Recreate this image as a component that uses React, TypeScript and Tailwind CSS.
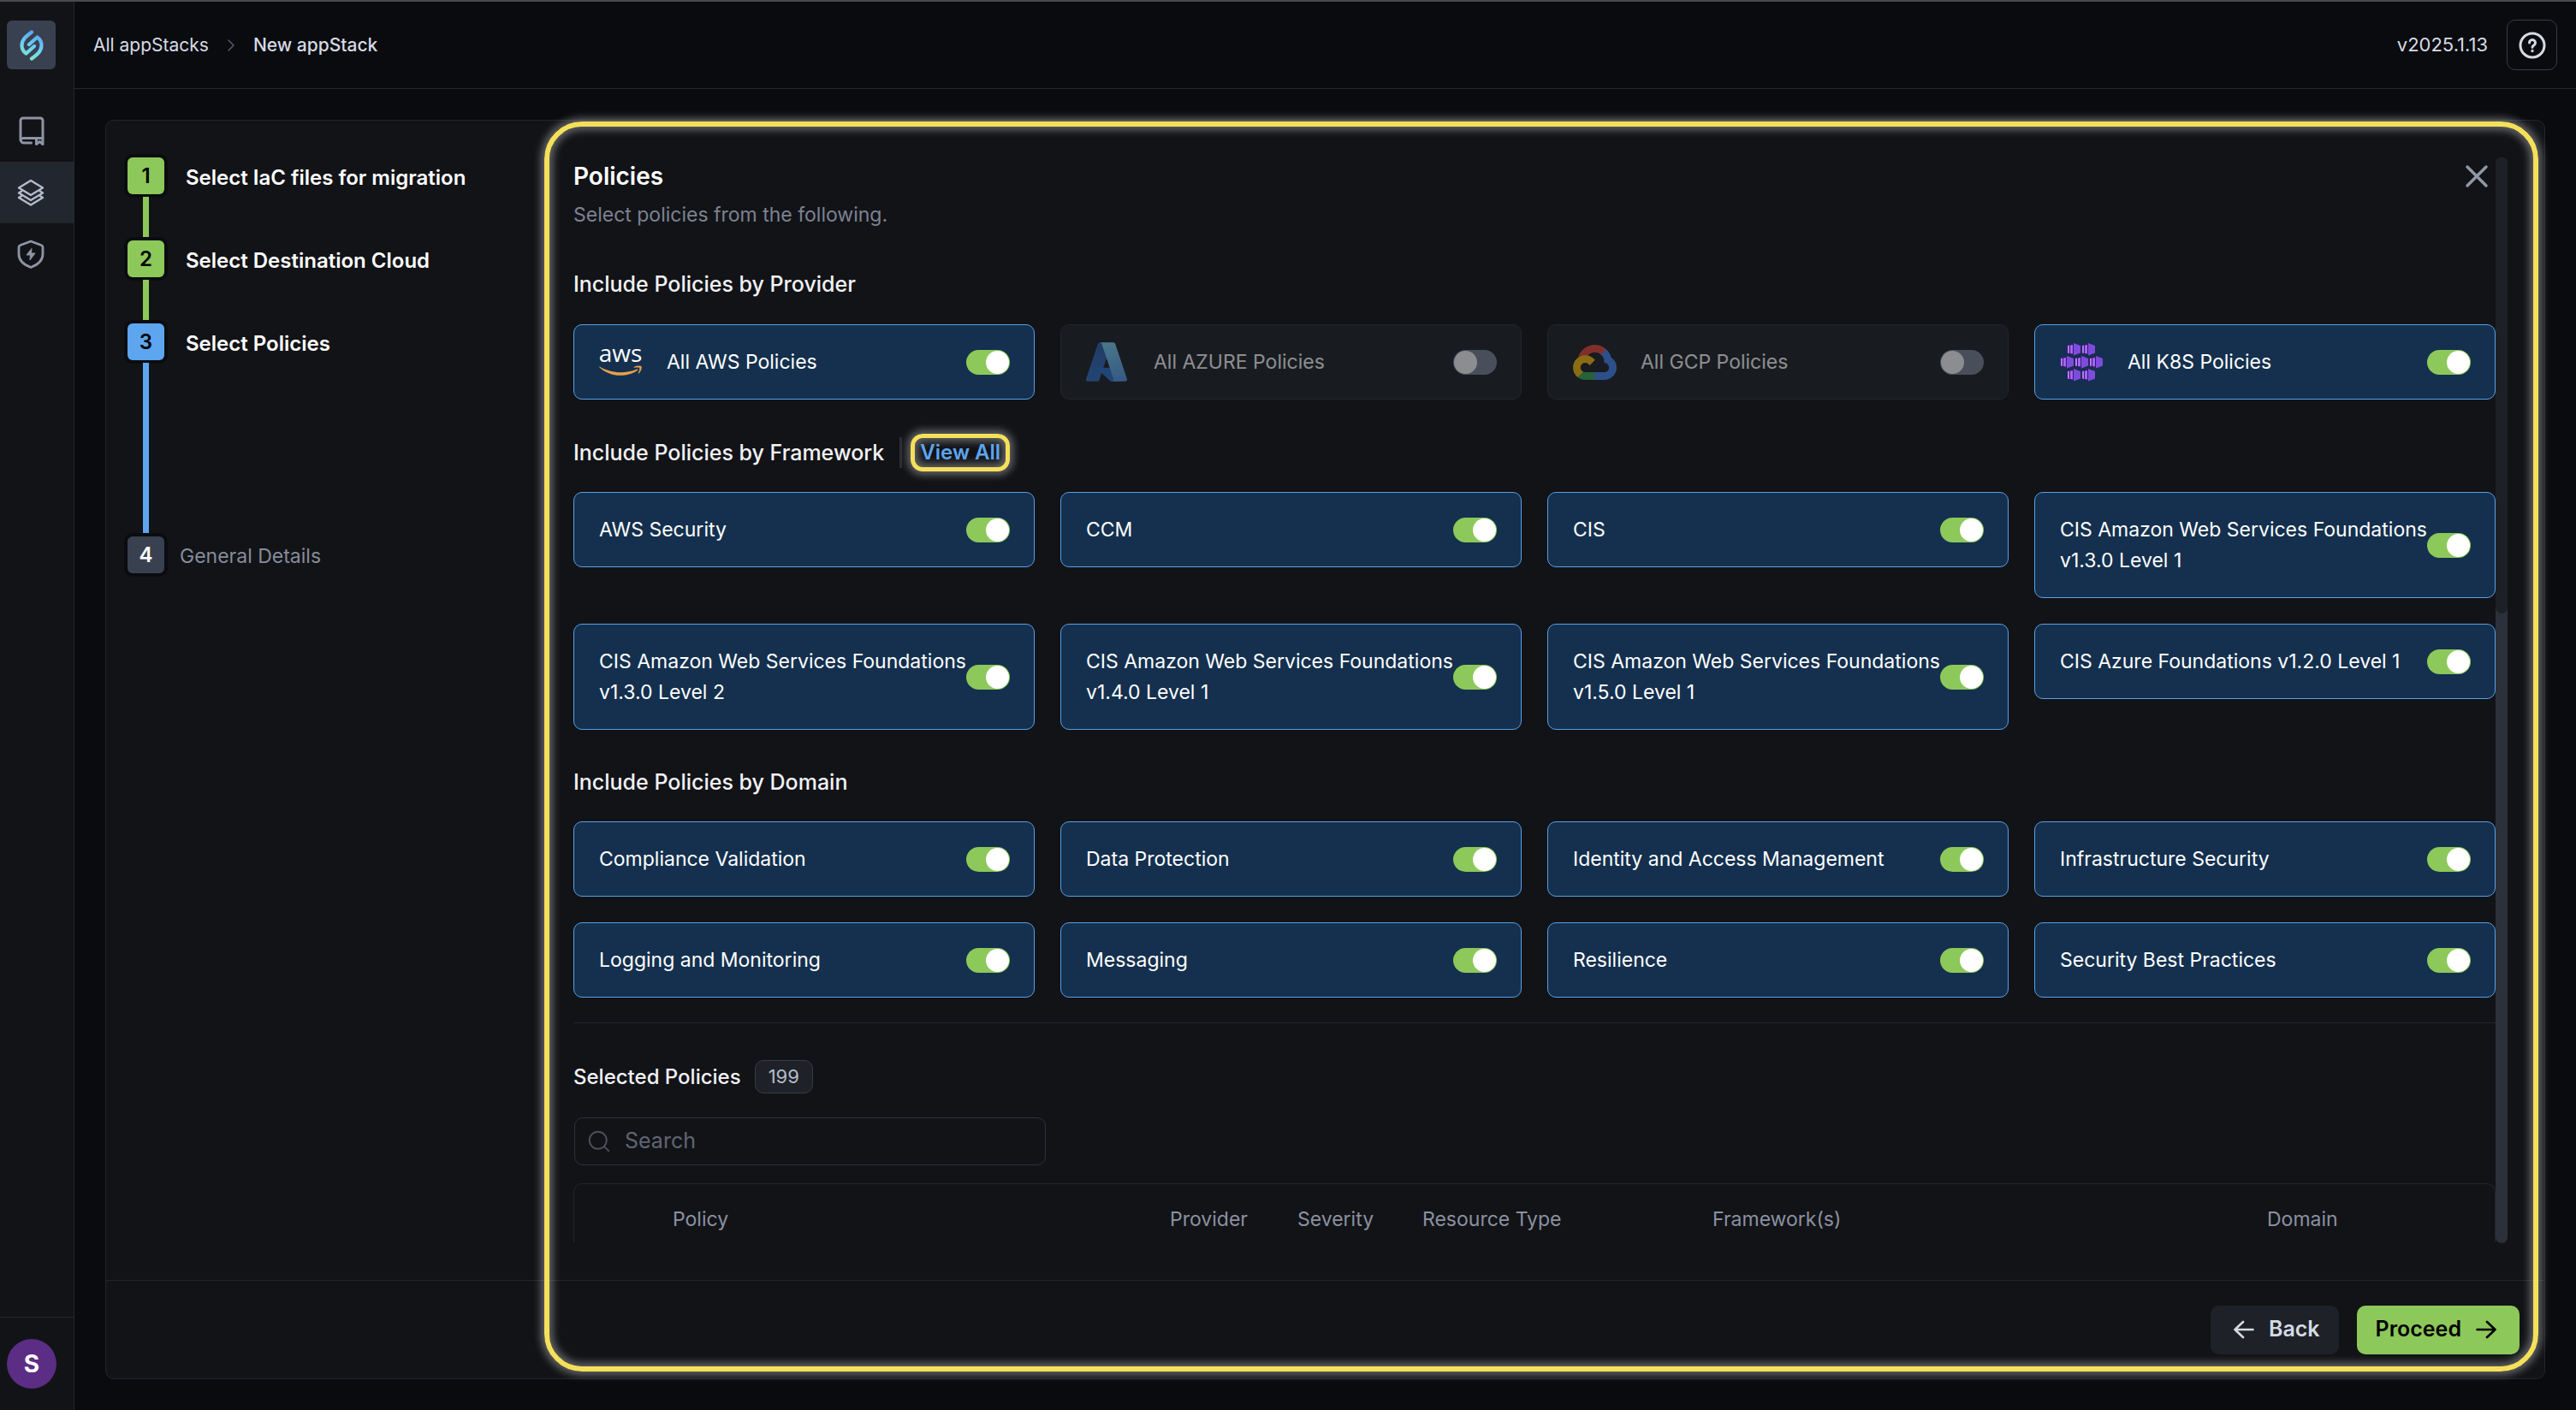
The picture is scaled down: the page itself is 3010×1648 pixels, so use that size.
import React, { useState } from 'react';
import { ChevronRight, Search } from 'lucide-react';

type Provider = 'aws' | 'azure' | 'gcp' | 'k8s';

interface Policy {
  name: string;
  provider?: Provider;
  disabled?: boolean;
}

const PROVIDERS: Policy[] = [
  { name: 'All AWS Policies', provider: 'aws' },
  { name: 'All AZURE Policies', provider: 'azure', disabled: true },
  { name: 'All GCP Policies', provider: 'gcp', disabled: true },
  { name: 'All K8S Policies', provider: 'k8s' }
];

const FRAMEWORKS: Policy[] = [
  { name: 'AWS Security' },
  { name: 'CCM' },
  { name: 'CIS' },
  { name: 'CIS Amazon Web Services Foundations v1.3.0 Level 1' },
  { name: 'CIS Amazon Web Services Foundations v1.3.0 Level 2' },
  { name: 'CIS Amazon Web Services Foundations v1.4.0 Level 1' },
  { name: 'CIS Amazon Web Services Foundations v1.5.0 Level 1' },
  { name: 'CIS Azure Foundations v1.2.0 Level 1' }
];

const DOMAINS: Policy[] = [
  { name: 'Compliance Validation' },
  { name: 'Data Protection' },
  { name: 'Identity and Access Management' },
  { name: 'Infrastructure Security' },
  { name: 'Logging and Monitoring' },
  { name: 'Messaging' },
  { name: 'Resilience' },
  { name: 'Security Best Practices' }
];

function BrandLogo() {
  return (
    <svg viewBox="0 0 28 36" className="h-9 w-7" fill="none" aria-hidden="true">
      <defs>
        <linearGradient id="brand" x1="20" y1="2" x2="8" y2="34" gradientUnits="userSpaceOnUse">
          <stop stopColor="#5aa2f0" />
          <stop offset="0.6" stopColor="#6fd3f5" />
          <stop offset="1" stopColor="#7ee6c8" />
        </linearGradient>
      </defs>
      <g stroke="url(#brand)" strokeWidth="4.2" strokeLinecap="round" strokeLinejoin="round">
        <path d="M14 2.500 C8 7 2.500 11 2.500 18 C2.500 22 4.500 25.500 7.500 27.500 L17 19" />
        <path d="M14 33.500 C20 29 25.500 25 25.500 18 C25.500 14 23.500 10.500 20.500 8.500 L11 17" />
      </g>
    </svg>);

}

function BookIcon() {
  return (
    <svg viewBox="0 0 30 34" className="h-[34px] w-[30px]" fill="none" stroke="currentColor" strokeWidth="3" strokeLinecap="round" strokeLinejoin="round" aria-hidden="true">
      <path d="M14.500 31 H6 a4 4 0 0 1 -4 -4 V5 a3 3 0 0 1 3 -3 H25 a3 3 0 0 1 3 3 V25.500 H6 a4 4 0 0 0 -4 2" />
      <path d="M20.500 26 V32.500 L24.300 29.500 L28 32.500 V25.500" />
    </svg>);

}

function LayersIcon() {
  return (
    <svg viewBox="0 0 32 32" className="size-8" fill="none" stroke="currentColor" strokeWidth="2.400" strokeLinejoin="round" aria-hidden="true">
      <path d="M16 2 L30 10.500 L16 19 L2 10.500 Z" />
      <path d="M6 14 L2 16.500 L16 25 L30 16.500 L26 14" />
      <path d="M6 19.500 L2 22 L16 30.500 L30 22 L26 19.500" />
    </svg>);

}

function ShieldIcon() {
  return (
    <svg viewBox="0 0 32 34" className="h-[34px] w-8" fill="none" stroke="currentColor" strokeWidth="2.8" strokeLinejoin="round" aria-hidden="true">
      <path d="M16 2 L28 6.500 C29.500 7 30 8 30 9.500 V17 C30 24.500 24 29.500 16 32.500 C8 29.500 2 24.500 2 17 V9.500 C2 8 2.500 7 4 6.500 Z" />
      <path d="M17 10.500 L11 18 H15.500 L15 24 L21 16 H16.500 Z" fill="currentColor" strokeWidth="1" />
    </svg>);

}

function HelpIcon() {
  return (
    <svg viewBox="0 0 32 32" className="size-8" fill="none" stroke="currentColor" strokeWidth="3" strokeLinecap="round" aria-hidden="true">
      <circle cx="16" cy="16" r="14" />
      <path d="M12.500 13 a3.500 3.500 0 1 1 5.500 2.800 c-1.400 0.900 -2 1.400 -2 2.500" />
      <circle cx="16" cy="22.500" r="0.700" strokeWidth="2" />
    </svg>);

}

function CloseIcon() {
  return (
    <svg viewBox="0 0 28 28" className="size-7" fill="none" stroke="currentColor" strokeWidth="3.5" strokeLinecap="round" aria-hidden="true">
      <path d="M3 3 L25 25 M25 3 L3 25" />
    </svg>);

}

function BackArrow() {
  return (
    <svg viewBox="0 0 24 22" className="h-[22px] w-6" fill="none" stroke="currentColor" strokeWidth="2.600" strokeLinecap="round" strokeLinejoin="round" aria-hidden="true">
      <path d="M22.500 11 H1.500 M11 2 L1.500 11 L11 20" />
    </svg>);

}

function ForwardArrow() {
  return (
    <svg viewBox="0 0 24 22" className="h-[22px] w-6" fill="none" stroke="currentColor" strokeWidth="2.600" strokeLinecap="round" strokeLinejoin="round" aria-hidden="true">
      <path d="M1.500 11 H22.500 M13 2 L22.500 11 L13 20" />
    </svg>);

}

function AwsLogo() {
  return (
    <svg viewBox="0 0 50 52" className="h-[52px] w-[50px] overflow-visible" aria-hidden="true">
      <text x="25" y="26" textAnchor="middle" fontSize="28" fontWeight="500" fill="#ffffff" className="font-['Open_Sans',sans-serif]">aws</text>
      <g fill="#e8a04a" transform="translate(0 12) scale(0.1645)">
        <path d="M273.500 143.700c-32.900 24.300-80.700 37.200-121.800 37.200c-57.600 0-109.500-21.300-148.700-56.700c-3.100-2.800-0.300-6.600 3.400-4.400c42.400 24.600 94.700 39.500 148.800 39.500c36.500 0 76.600-7.600 113.500-23.200C274.200 133.600 278.900 139.700 273.500 143.700z" />
        <path d="M287.200 128.100c-4.200-5.400-27.800-2.600-38.500-1.300c-3.200 0.400-3.700-2.400-0.800-4.500c18.800-13.200 49.700-9.400 53.300-5c3.600 4.500-1 35.400-18.600 50.200c-2.700 2.300-5.300 1.100-4.100-1.900C282.500 155.700 291.400 133.400 287.200 128.100z" />
      </g>
    </svg>);

}

function AzureLogo() {
  return (
    <svg viewBox="4 6 88 84" preserveAspectRatio="none" className="h-[46px] w-12" aria-hidden="true">
      <defs>
        <linearGradient id="azure-left" x1="42" y1="12" x2="16" y2="92" gradientUnits="userSpaceOnUse">
          <stop stopColor="#2b5da6" />
          <stop offset="1" stopColor="#2c70c8" />
        </linearGradient>
        <linearGradient id="azure-right" x1="46" y1="10" x2="75" y2="89" gradientUnits="userSpaceOnUse">
          <stop stopColor="#7ad2f4" />
          <stop offset="1" stopColor="#5598e6" />
        </linearGradient>
      </defs>
      <path fill="url(#azure-left)" d="M33.338 6.544h26.038l-27.030 80.087a4.152 4.152 0 0 1-3.933 2.824H8.149a4.145 4.145 0 0 1-3.928-5.470L29.404 9.368a4.152 4.152 0 0 1 3.934-2.825z" />
      <path fill="#2c6fce" d="M71.175 60.261h-41.290a1.911 1.911 0 0 0-1.305 3.309l26.532 24.764a4.171 4.171 0 0 0 2.846 1.121h23.380z" />
      <path fill="url(#azure-right)" d="M66.595 9.364a4.145 4.145 0 0 0-3.928-2.820H33.648a4.146 4.146 0 0 1 3.928 2.820l25.184 74.620a4.146 4.146 0 0 1-3.928 5.472h29.020a4.146 4.146 0 0 0 3.927-5.472z" />
    </svg>);

}

function GcpLogo() {
  return (
    <svg viewBox="0 0 256 206" className="h-[41px] w-[51px]" aria-hidden="true">
      <path fill="#ea4335" d="M170.252 56.819l22.253-22.253 1.483-9.370C153.437-11.677 88.976-7.496 52.420 33.920 42.267 45.423 34.734 59.764 30.717 74.573l7.970-1.123 44.505-7.340 3.436-3.513c19.797-21.742 53.270-24.667 76.128-6.168l7.496.390z" />
      <path fill="#4285f4" d="M224.205 73.918a100.249 100.249 0 0 0-30.217-48.722l-31.232 31.232a55.515 55.515 0 0 1 20.379 44.037v5.544c15.350 0 27.797 12.445 27.797 27.796 0 15.352-12.446 27.573-27.797 27.573h-55.671l-5.466 5.934v33.340l5.466 5.231h55.670c39.930.311 72.553-31.494 72.864-71.424a72.303 72.303 0 0 0-31.793-60.541" />
      <path fill="#34a853" d="M71.870 205.796h55.593V161.290H71.870a27.275 27.275 0 0 1-11.400-2.498l-7.887 2.420-22.409 22.253-1.952 7.574c12.567 9.489 27.900 14.825 43.647 14.757" />
      <path fill="#fbbc05" d="M71.870 61.425C31.940 61.664-.237 94.228.001 134.158a72.301 72.301 0 0 0 28.222 56.880l32.248-32.246c-13.990-6.322-20.208-22.786-13.887-36.776 6.320-13.990 22.786-20.208 36.775-13.888a27.796 27.796 0 0 1 13.887 13.888l32.248-32.248A72.224 72.224 0 0 0 71.870 61.425" />
    </svg>);

}

const K8S_BOXES = [[8, 0], [25, 0], [0, 15], [17, 15], [34, 15], [8, 30], [25, 30]];

function K8sLogo() {
  return (
    <svg viewBox="0 0 50 45" className="h-[45px] w-[50px]" aria-hidden="true">
      {K8S_BOXES.map(([x, y]) =>
      <g key={`${x}-${y}`} transform={`translate(${x} ${y})`}>
          <path fill="#341a6e" d="M0 2 L8 0 V14.500 L0 12.500 Z" />
          <path fill="#b77af4" d="M1 3 L3 2.500 V12 L1 11.500 Z" />
          <path fill="#a067f0" d="M4 2.500 L7 2 V12.500 L4 12 Z" />
          <path fill="#7f4bdc" d="M8 0 L16 3 V11.500 L8 14.500 Z" />
        </g>
      )}
    </svg>);

}

const LOGOS = { aws: AwsLogo, azure: AzureLogo, gcp: GcpLogo, k8s: K8sLogo };

function PolicyCard({ policy }: {policy: Policy;}) {
  const [on, setOn] = useState(!policy.disabled);
  const Logo = policy.provider && LOGOS[policy.provider];
  return (
    <label
      className={`flex items-center justify-between rounded-[10px] border py-[25px] pr-7 pl-[29px] ${policy.disabled ? 'border-[#22252b] bg-[#181b20]' : 'border-[#5a9fe6] bg-[#14304e]'}`}>

      <span className={`-mr-2 flex min-w-0 items-center ${policy.disabled ? 'opacity-50' : ''}`}>
        {Logo &&
        <span className="-my-2 flex w-[79px] shrink-0 items-center">
            <Logo />
          </span>
        }
        <span className="text-[23px] leading-9 text-white">{policy.name}</span>
      </span>
      <input
        type="checkbox"
        role="switch"
        checked={on}
        disabled={policy.disabled}
        onChange={(e) => setOn(e.target.checked)}
        className="flex h-[29px] w-[51px] shrink-0 appearance-none items-center rounded-full bg-[#7b8296] p-px before:size-[27px] before:rounded-full before:bg-white checked:justify-end checked:bg-[#8dc85a] disabled:opacity-50" />

    </label>);

}

function PolicyGrid({ policies }: {policies: Policy[];}) {
  return (
    <div className="grid grid-cols-4 items-start gap-[30px]">
      {policies.map((p) =>
      <PolicyCard key={p.name} policy={p} />
      )}
    </div>);

}

function Sidebar() {
  return (
    <aside className="flex w-[87px] shrink-0 flex-col border-r border-[#24272c] bg-[#121317] text-[#8d94a3]">
      <a href="#home" aria-label="Home" className="mt-[22px] ml-2 flex size-[57px] items-center justify-center rounded-md bg-[#394150]">
        <BrandLogo />
      </a>
      <nav className="mt-9 flex flex-col">
        <a href="#catalog" aria-label="Catalog" className="flex h-[72px] items-center pl-[22px]">
          <BookIcon />
        </a>
        <a href="#stacks" aria-label="Stacks" className="flex h-[72px] items-center bg-[#22262f] pl-5 text-[#b4bccb]">
          <LayersIcon />
        </a>
        <a href="#security" aria-label="Security" className="flex h-[72px] items-center pl-5">
          <ShieldIcon />
        </a>
      </nav>
      <div className="mt-auto border-t border-[#24272c] py-[25px] pl-2">
        <button className="flex size-[58px] items-center justify-center rounded-full bg-[#5b2d84] text-[28px] font-bold text-white">S</button>
      </div>
    </aside>);

}

const STEP_BOX = 'flex size-[43px] shrink-0 items-center justify-center rounded-md text-[24px] font-semibold ring-4 ring-[#0a0c10]';

function Steps() {
  return (
    <ol className="flex w-[546px] shrink-0 flex-col pt-[43px] pl-[25px] text-[24px] font-semibold text-white">
      <li className="flex gap-[25px]">
        <div className="flex flex-col items-center">
          <span className={`${STEP_BOX} bg-[#8dc85a] text-black`}>1</span>
          <span className="my-[3px] h-12 w-[7px] bg-[#8dc85a]" />
        </div>
        <span className="leading-[47px]">Select IaC files for migration</span>
      </li>
      <li className="flex gap-[25px]">
        <div className="flex flex-col items-center">
          <span className={`${STEP_BOX} bg-[#8dc85a] text-black`}>2</span>
          <span className="my-[3px] h-12 w-[7px] bg-[#8dc85a]" />
        </div>
        <span className="leading-[47px]">Select Destination Cloud</span>
      </li>
      <li className="flex gap-[25px]">
        <div className="flex flex-col items-center">
          <span className={`${STEP_BOX} bg-[#5da5ef] text-black`}>3</span>
          <span className="my-[3px] h-[200px] w-[7px] bg-[#5da5ef]" />
        </div>
        <span className="leading-[47px]">Select Policies</span>
      </li>
      <li className="flex gap-[18px]">
        <span className={`${STEP_BOX} bg-[#394150] text-white`}>4</span>
        <span className="text-[23px] leading-[47px] font-normal text-[#868c9b]">General Details</span>
      </li>
    </ol>);

}

const HEADING = 'text-[25px] leading-9 font-medium text-[#f1f2f5]';
const GLOW = 'shadow-[0_0_10px_4px_rgba(255,255,255,0.35),inset_0_0_10px_4px_rgba(255,255,255,0.35)]';

function Policies() {
  return (
    <section className="min-w-0 flex-1">
      <div className="flex items-start justify-between">
        <div>
          <h1 className="text-[28px] leading-[44px] font-semibold text-white">Policies</h1>
          <p className="text-[23px] leading-[46px] text-[#7c8292]">Select policies from the following.</p>
        </div>
        <button aria-label="Close" className="p-2 text-[#9097a5]">
          <CloseIcon />
        </button>
      </div>

      <h2 className={`mt-10 mb-[29px] ${HEADING}`}>Include Policies by Provider</h2>
      <PolicyGrid policies={PROVIDERS} />

      <div className="mt-11 mb-7 flex items-center">
        <h2 className={HEADING}>Include Policies by Framework</h2>
        <span className="ml-[18px] h-9 w-[3px] bg-[#2a2d34]" />
        <button className={`-my-1 ml-2.5 h-11 rounded-[14px] border-[5px] border-[#f4e05b] px-1.5 text-[24px] leading-[34px] font-semibold text-[#5da5ef] ${GLOW}`}>View All</button>
      </div>
      <PolicyGrid policies={FRAMEWORKS} />

      <h2 className={`mt-[43px] mb-7 ${HEADING}`}>Include Policies by Domain</h2>
      <PolicyGrid policies={DOMAINS} />

      <div className="mt-[29px] flex items-center gap-4 border-t border-[#22252a] pt-[43px]">
        <h2 className="text-[24px] leading-9 font-medium text-[#f1f2f5]">Selected Policies</h2>
        <span className="h-[39px] rounded-[10px] border border-[#363c46] bg-[#1e2228] px-[15px] text-[22px] leading-9 text-[#b4bccb]">199</span>
      </div>

      <div className="mt-7 ml-px flex h-14 w-[551px] items-center gap-[15px] rounded-[10px] border border-[#2d3037] pl-[13px] focus-within:border-[#5da5ef]">
        <Search className="size-[30px] text-[#4a505c]" strokeWidth={1.5} />
        <input
          type="search"
          aria-label="Search"
          placeholder="Search"
          className="min-w-0 flex-1 bg-transparent text-[25px] text-white outline-none placeholder:text-[#5f6574]" />

      </div>

      <div className="mt-[21px] h-[69px] overflow-hidden rounded-t-[10px] border border-b-0 border-[#22252a]">
        <table className="w-full table-fixed text-left text-[23px] text-[#8b91a0]">
          <thead>
            <tr className="h-[82px] [&>th]:p-0 [&>th]:font-normal">
              <th className="w-[115px]"></th>
              <th className="w-[581px]">Policy</th>
              <th className="w-[149px]">Provider</th>
              <th className="w-[146px]">Severity</th>
              <th className="w-[339px]">Resource Type</th>
              <th className="w-[648px]">Framework(s)</th>
              <th>Domain</th>
            </tr>
          </thead>
        </table>
      </div>
    </section>);

}

export default function App() {
  return (
    <div className="flex h-screen flex-col border-t-2 border-[#4a4a4c] bg-[#0a0b0f] font-['Inter',sans-serif]">
      <div className="flex min-h-0 flex-1">
        <Sidebar />
        <div className="flex min-w-0 flex-1 flex-col">
          <header className="flex h-[102px] shrink-0 items-center justify-between border-b border-[#24272c] pr-[22px] pl-[22px] text-[22px] text-[#d5dae4]">
            <nav aria-label="Breadcrumb" className="flex items-center text-[21px]">
              <a href="#appstacks">All appStacks</a>
              <ChevronRight className="mx-3.5 size-6 text-[#555b68]" strokeWidth={1.5} />
              <span className="font-medium">New appStack</span>
            </nav>
            <div className="flex items-center gap-[22px]">
              <span>v2025.1.13</span>
              <button aria-label="Help" className="flex size-[59px] items-center justify-center rounded-[10px] border border-[#363c46]">
                <HelpIcon />
              </button>
            </div>
          </header>

          <main className="relative m-9 flex min-h-0 flex-1 flex-col rounded-[10px] border border-[#22252a] bg-[#121317]">
            <div className="flex min-h-0 flex-1">
              <Steps />
              <div className="mt-[43px] mr-[43px] mb-[43px] flex min-w-0 flex-1">
                <Policies />
                <div className="w-3.5 shrink-0 rounded-full bg-[#2b303a]">
                  <div className="h-[42%] rounded-full bg-[#1d2127]" />
                </div>
              </div>
            </div>
            <footer className="flex h-[115px] shrink-0 items-center justify-end gap-[21px] border-t border-[#22252a] pr-[29px] text-[25px] font-semibold">
              <button className="flex h-[57px] items-center gap-[17px] rounded-[10px] bg-[#1e2228] pr-[22px] pl-[27px] text-[#d5dae4]">
                <BackArrow />
                Back
              </button>
              <button className="flex h-[57px] items-center gap-[17px] rounded-[10px] bg-[#8dc85a] pr-[27px] pl-[22px] text-black">
                Proceed
                <ForwardArrow />
              </button>
            </footer>
            {/* highlight around the active step's panel */}
            <div className={`pointer-events-none absolute top-px right-[7px] bottom-2 left-[512px] rounded-[44px] border-[6px] border-[#f4e05b] ${GLOW}`} />
          </main>
        </div>
      </div>
    </div>);

}
